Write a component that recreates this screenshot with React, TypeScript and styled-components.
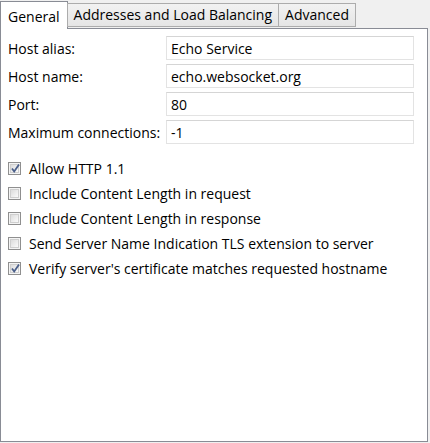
import React from "react";
import styled, { createGlobalStyle } from "styled-components";

const Global = createGlobalStyle`
  html, body { margin: 0; padding: 0; background: #f0f0f0; }
  body { font-family: "Open Sans", "Noto Sans", sans-serif; font-size: 14px; color: #000; }
`;

const Window = styled.div`
  width: 430px;
  height: 443px;
  display: flex;
  flex-direction: column;
  background: #f0f0f0;
  box-sizing: border-box;
  padding: 0 2px 1px 0;
`;

const TabStrip = styled.div`
  display: flex;
  align-items: flex-end;
  height: 28px;
  position: relative;
  z-index: 1;
`;

const Tab = styled.div<{ $active?: boolean }>`
  box-sizing: border-box;
  height: ${(p) => (p.$active ? "28px" : "24px")};
  margin-bottom: ${(p) => (p.$active ? "-1px" : "1px")};
  padding: ${(p) => (p.$active ? "2px 7px 0 7px" : "0 6px")};
  margin-left: ${(p) => (p.$active ? "0" : "-1px")};
  border: 1px solid ${(p) => (p.$active ? "#898c95" : "#acacac")};
  border-bottom: ${(p) => (p.$active ? "none" : "1px solid #acacac")};
  background: ${(p) => (p.$active ? "#fff" : "linear-gradient(#f2f2f2, #e5e5e5)")};
  display: flex;
  align-items: center;
  white-space: nowrap;
  line-height: 1;
`;

const Panel = styled.div`
  flex: 1;
  background: #fff;
  border: 1px solid #898c95;
  padding: 5px 13px 0 7px;
  display: flex;
  flex-direction: column;
`;

const FieldRow = styled.div`
  display: grid;
  grid-template-columns: 158px 1fr;
  align-items: center;
  height: 28px;
`;

const Label = styled.span`
  white-space: nowrap;
`;

const Input = styled.div`
  box-sizing: border-box;
  height: 24px;
  border: 1px solid #e3e3e3;
  border-top-color: #d5d5d5;
  padding: 0 4px;
  display: flex;
  align-items: center;
`;

const CheckList = styled.div`
  display: flex;
  flex-direction: column;
  margin-top: 10px;
`;

const CheckRow = styled.div`
  display: flex;
  align-items: center;
  height: 25px;
  gap: 8px;
  white-space: nowrap;
`;

const Box = styled.span`
  box-sizing: border-box;
  width: 13px;
  height: 13px;
  border: 1px solid #8f8f8f;
  background: #f4f4f4;
  position: relative;
  flex: none;
  &::after {
    content: "";
    position: absolute;
    inset: 1px;
    border: 1px solid #cfcfcf;
    background: linear-gradient(135deg, #dcdcdc, #fbfbfb);
  }
  svg { position: absolute; left: 1px; top: 0px; z-index: 1; }
`;

const fields = [
  ["Host alias:", "Echo Service"],
  ["Host name:", "echo.websocket.org"],
  ["Port:", "80"],
  ["Maximum connections:", "-1"],
];

const checks: [string, boolean][] = [
  ["Allow HTTP 1.1", true],
  ["Include Content Length in request", false],
  ["Include Content Length in response", false],
  ["Send Server Name Indication TLS extension to server", false],
  ["Verify server's certificate matches requested hostname", true],
];

const Check = ({ on }: { on: boolean }) => (
  <Box>
    {on && (
      <svg width="11" height="11" viewBox="0 0 11 11">
        <path d="M2 5.5 L4.2 8.5 L9 1.5" fill="none" stroke="#4a5f8a" strokeWidth="1.8" />
      </svg>
    )}
  </Box>
);

export default function App() {
  return (
    <Window>
      <Global />
      <TabStrip>
        <Tab $active>General</Tab>
        <Tab>Addresses and Load Balancing</Tab>
        <Tab>Advanced</Tab>
      </TabStrip>
      <Panel>
        {fields.map(([l, v]) => (
          <FieldRow key={l}>
            <Label>{l}</Label>
            <Input>{v}</Input>
          </FieldRow>
        ))}
        <CheckList>
          {checks.map(([t, on]) => (
            <CheckRow key={t}>
              <Check on={on} />
              <span>{t}</span>
            </CheckRow>
          ))}
        </CheckList>
      </Panel>
    </Window>
  );
}
